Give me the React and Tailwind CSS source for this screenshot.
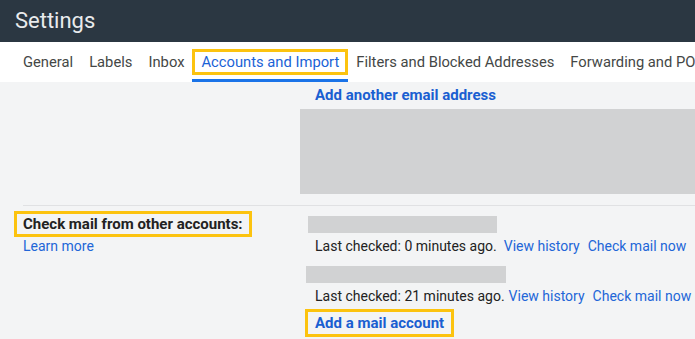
const tabs = ['General', 'Labels', 'Inbox', 'Accounts and Import', 'Filters and Blocked Addresses', 'Forwarding and POP/IMAP'];

function Tab({ label, active }) {
  if (active) {
    return (
      <div className="relative h-full flex items-center shrink-0">
        <span className="border-[3px] border-[#fcc30f] px-[6px] h-[26px] flex items-center text-[#1a62d6]">{label}</span>
        <div className="absolute left-0 right-0 bottom-0 h-[3px] bg-[#1a73e8]" />
      </div>
    );
  }
  return <div className="h-full flex items-center px-2 shrink-0 text-[#444746]">{label}</div>;
}

function CheckedRow({ bar, mins, pad, gap }) {
  return (
    <div className="flex flex-col">
      <div className={`h-[17px] bg-[#d1d2d3] ${bar}`} />
      <div className={`mt-[5px] flex items-center h-[17px] text-[14px] whitespace-nowrap ${pad}`}>
        <span className="text-[#222]">Last checked: {mins} minutes ago.</span>
        <span className={`text-[#2266d8] ${gap}`}>View history</span>
        <span className="ml-[8px] text-[#2266d8]">Check mail now</span>
      </div>
    </div>
  );
}

export default function App() {
  return (
    <div className="w-[695px] h-[339px] overflow-hidden bg-[#f3f4f5] font-['Roboto',sans-serif]">
      <div className="h-[42px] bg-[#2b3742] flex items-center pl-[15px]">
        <h1 className="text-[22px] text-[#e9ebed] leading-none">Settings</h1>
      </div>

      <div className="h-[40px] bg-white flex items-stretch pl-[15px] text-[14.75px] whitespace-nowrap overflow-hidden">
        {tabs.map((t) => (
          <Tab key={t} label={t} active={t === 'Accounts and Import'} />
        ))}
      </div>

      <div className="flex flex-col">
        <div className="flex flex-col pl-[300px] pt-[5px]">
          <a className="pl-[15px] h-[17px] flex items-center text-[15px] font-bold text-[#1a5fd1]">Add another email address</a>
          <div className="mt-[5px] h-[85px] bg-[#d1d2d3]" />
        </div>
        <div className="ml-[23px] mt-[11px] h-px bg-[#e0e1e3]" />

        <div className="flex">
          <div className="w-[300px] shrink-0 flex flex-col items-start pl-[14px] pt-[5px]">
            <div className="border-[3px] border-[#fcc30f] px-[6px] h-[26px] flex items-center text-[15px] font-bold text-[#222] whitespace-nowrap">
              Check mail from other accounts:
            </div>
            <a className="pl-[9px] mt-[1px] h-[17px] flex items-center text-[14px] text-[#2266d8]">Learn more</a>
          </div>

          <div className="flex flex-col pt-[10px]">
            <div className="pl-[8px]">
              <CheckedRow bar="w-[189px]" mins="0" pad="pl-[7px]" gap="ml-[7px]" />
            </div>
            <div className="pl-[6px] mt-[11px]">
              <CheckedRow bar="w-[200px]" mins="21" pad="pl-[9px]" gap="ml-[4px]" />
            </div>
            <div className="pl-[5px] mt-[4px]">
              <div className="inline-flex border-[3px] border-[#fcc30f] px-[7px] h-[28px] items-center text-[15px] font-bold text-[#1a5fd1] whitespace-nowrap">
                Add a mail account
              </div>
            </div>
          </div>
        </div>
      </div>
    </div>
  );
}
